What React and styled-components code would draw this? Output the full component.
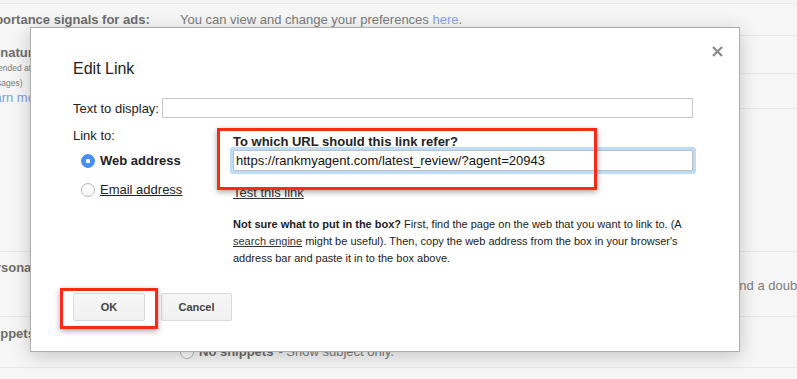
import React from "react";
import styled, { createGlobalStyle } from "styled-components";

const GlobalStyle = createGlobalStyle`
  html, body {
    margin: 0;
    padding: 0;
  }
  body {
    font-family: "Liberation Sans", Arial, sans-serif;
    background: #f6f6f6;
  }
`;

// Settings page behind the dialog
const Page = styled.div`
  position: relative;
  width: 797px;
  height: 379px;
  overflow: hidden;
  background: #f6f6f6;
`;

const TopStrip = styled.div`
  height: 3px;
  border-bottom: 1px solid #e9e9e9;
`;

const Row = styled.div`
  display: grid;
  grid-template-columns: 200px 1fr;
  margin-left: -20px;
  height: ${(p) => p.$h}px;
  box-sizing: border-box;
  border-bottom: ${(p) => (p.$full ? "1px solid #e7e7e7" : "none")};
`;

const Label = styled.div`
  padding-top: ${(p) => p.$top || 8}px;
  font-size: 13px;
  line-height: 16px;
  font-weight: bold;
  color: #6d6d6d;
  white-space: nowrap;
`;

const LabelNote = styled.div`
  margin-left: 1px;
  font-weight: normal;
  font-size: 8.5px;
  line-height: 15px;
  color: #7a7a7a;
`;

const LabelLink = styled.div`
  font-weight: normal;
  font-size: 13px;
  line-height: 14px;
  color: #7f9ce6;
`;

const Value = styled.div`
  display: flex;
  flex-direction: column;
`;

const ValueBlock = styled.div`
  height: ${(p) => p.$h}px;
  box-sizing: border-box;
  padding-top: ${(p) => p.$top || 0}px;
  border-bottom: ${(p) => (p.$line ? "1px solid #e7e7e7" : "none")};
  font-size: 13px;
  line-height: 18px;
  color: #7b7b7b;
  white-space: nowrap;
`;

const PageLink = styled.span`
  color: #86a2f0;
`;

const PageOption = styled.div`
  display: flex;
  align-items: center;
  gap: 5px;
  font-size: 13px;
  line-height: 18px;
  color: #7b7b7b;
  white-space: nowrap;
  b {
    color: #6d6d6d;
  }
`;

// Dialog
const Dialog = styled.div`
  position: absolute;
  left: 30px;
  top: 27px;
  width: 710px;
  height: 325px;
  box-sizing: border-box;
  padding: 31px 46px 0 42px;
  background: #fff;
  border: 1px solid #adadad;
  box-shadow: 0 4px 18px rgba(0, 0, 0, 0.2);
  color: #222;
  font-size: 13px;
`;

const Title = styled.h2`
  margin: 0;
  font-size: 16px;
  line-height: 20px;
  font-weight: normal;
  color: #222;
`;

const Close = styled.div`
  position: absolute;
  top: 17px;
  right: 16px;
  width: 11px;
  height: 11px;
`;

const FieldRow = styled.div`
  display: flex;
  align-items: center;
  gap: 3px;
  margin-top: 19px;
`;

const TextInput = styled.div`
  flex: 1;
  height: 20px;
  box-sizing: border-box;
  border: 1px solid #c9c9c9;
  background: #fff;
`;

const LinkSection = styled.div`
  display: grid;
  grid-template-columns: 160px 1fr;
  margin-top: 10px;
`;

const LinkColumn = styled.div`
  display: flex;
  flex-direction: column;
  line-height: 16px;
`;

const RadioRow = styled.div`
  display: flex;
  align-items: center;
  gap: 5px;
  margin-top: ${(p) => p.$mt}px;
  padding-left: 8px;
  line-height: 16px;
  font-weight: ${(p) => (p.$checked ? "bold" : "normal")};
  span {
    text-decoration: ${(p) => (p.$checked ? "none" : "underline")};
  }
`;

const Radio = styled.span`
  display: inline-block;
  flex: none;
  width: 14px;
  height: 14px;
  box-sizing: border-box;
  border-radius: 50%;
  border: 1px solid ${(p) => (p.$checked ? "#3f8ef4" : "#b5b5b5")};
  background: ${(p) =>
    p.$checked
      ? "radial-gradient(circle, #fff 0 2px, #4590f5 2.5px)"
      : "linear-gradient(#f8f8f8, #fff)"};
`;

const UrlColumn = styled.div`
  display: flex;
  flex-direction: column;
  padding-top: 6px;
`;

const Heading = styled.div`
  font-weight: bold;
  line-height: 16px;
`;

const UrlInput = styled.div`
  height: 21px;
  box-sizing: border-box;
  padding: 0 2px;
  border: 1px solid #bdbdbd;
  box-shadow: 0 0 0 3px #bddcf8;
  border-radius: 1px;
  font-size: 13px;
  line-height: 19px;
  color: #111;
`;

const TestLink = styled.span`
  align-self: flex-start;
  margin-top: 14px;
  line-height: 16px;
  color: #333;
  text-decoration: underline;
`;

const Help = styled.p`
  margin: 15px 0 0;
  max-width: 458px;
  font-size: 11px;
  line-height: 17px;
  color: #222;
  u {
    color: #333;
  }
`;

const Buttons = styled.div`
  display: flex;
  gap: 16px;
  margin-top: 26px;
`;

const Button = styled.button`
  width: ${(p) => p.$w}px;
  height: 28px;
  padding: 0;
  border: 1px solid #d9d9d9;
  border-radius: 2px;
  background: linear-gradient(#f6f6f6, #f1f1f1);
  font-family: "Liberation Sans", Arial, sans-serif;
  font-size: 11px;
  font-weight: bold;
  color: #444;
`;

// Red annotation boxes drawn over the dialog
const Marker = styled.div`
  position: absolute;
  left: ${(p) => p.$x}px;
  top: ${(p) => p.$y}px;
  width: ${(p) => p.$w}px;
  height: ${(p) => p.$h}px;
  box-sizing: border-box;
  border: 3px solid #fc2a12;
  box-shadow: 0 2px 6px rgba(0, 0, 0, 0.35);
  pointer-events: none;
`;

const CloseIcon = () => (
  <svg width="11" height="11" viewBox="0 0 11 11">
    <path d="M1 1 L10 10 M10 1 L1 10" stroke="#8a8a8a" strokeWidth="2.2" />
  </svg>
);

const App = () => (
  <Page>
    <GlobalStyle />
    <TopStrip />
    <Row $h={32}>
      <Label $top={8}>Importance signals for ads:</Label>
      <Value>
        <ValueBlock $h={32} $top={7} $line>
          You can view and change your preferences <PageLink>here</PageLink>.
        </ValueBlock>
      </Value>
    </Row>
    <Row $h={73}>
      <Label $top={9}>
        Signature:
        <LabelNote>
          (appended at the end of all outgoing
          <br />
          messages)
        </LabelNote>
        <LabelLink>Learn more</LabelLink>
      </Label>
      <Value>
        <ValueBlock $h={38} $line />
        <ValueBlock $h={35} $line />
      </Value>
    </Row>
    <Row $h={143} $full>
      <Label />
      <Value />
    </Row>
    <Row $h={65} $full>
      <Label $top={8}>Personal level indicators:</Label>
      <Value>
        <ValueBlock $h={64} $top={7}>
          <PageOption>
            <Radio /> <b>No indicators</b>
          </PageOption>
          <PageOption>
            <Radio /> <b>Show indicators</b> - Display an arrow (›) by messages sent to my
            address (not a mailing list), and a double arrow (») by messages sent only to me.
          </PageOption>
        </ValueBlock>
      </Value>
    </Row>
    <Row $h={51} $full>
      <Label $top={9}>Snippets:</Label>
      <Value>
        <ValueBlock $h={50} $top={8}>
          <PageOption>
            <Radio /> <b>Show snippets</b> - Show snippets of the message.
          </PageOption>
          <PageOption>
            <Radio /> <b>No snippets</b> - Show subject only.
          </PageOption>
        </ValueBlock>
      </Value>
    </Row>

    <Dialog>
      <Title>Edit Link</Title>
      <Close>
        <CloseIcon />
      </Close>
      <FieldRow>
        <span>Text to display:</span>
        <TextInput />
      </FieldRow>
      <LinkSection>
        <LinkColumn>
          <span>Link to:</span>
          <RadioRow $mt={9} $checked>
            <Radio $checked />
            <span>Web address</span>
          </RadioRow>
          <RadioRow $mt={13}>
            <Radio />
            <span>Email address</span>
          </RadioRow>
        </LinkColumn>
        <UrlColumn>
          <Heading>To which URL should this link refer?</Heading>
          <UrlInput>https://rankmyagent.com/latest_review/?agent=20943</UrlInput>
          <TestLink>Test this link</TestLink>
          <Help>
            <b>Not sure what to put in the box?</b> First, find the page on the web that you
            want to link to. (A <u>search engine</u> might be useful). Then, copy the web
            address from the box in your browser's address bar and paste it in to the box
            above.
          </Help>
        </UrlColumn>
      </LinkSection>
      <Buttons>
        <Button $w={72}>OK</Button>
        <Button $w={71}>Cancel</Button>
      </Buttons>
      <Marker $x={186} $y={100} $w={380} $h={62} />
      <Marker $x={29} $y={260} $w={98} $h={41} />
    </Dialog>
  </Page>
);

export default App;
